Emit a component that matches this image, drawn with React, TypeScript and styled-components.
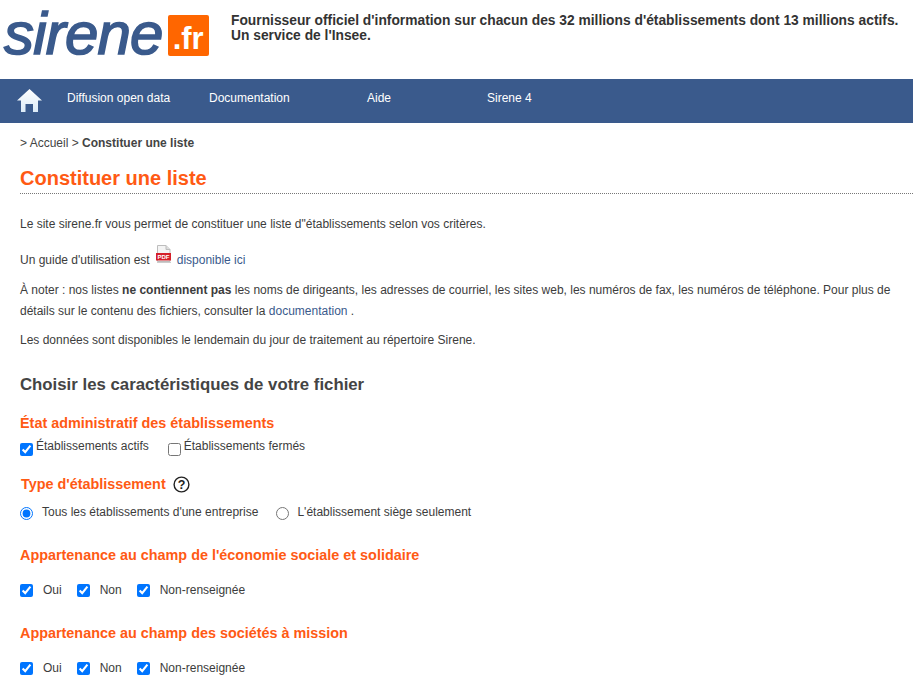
import React from "react";
import styled, { createGlobalStyle } from "styled-components";

const Global = createGlobalStyle`
  html, body { margin: 0; padding: 0; background: #fff; overflow: hidden; }
  body { font-family: "Liberation Sans", Arial, sans-serif; font-size: 12px; color: #333; }
`;
const Page = styled.div`width: 913px; height: 686px; overflow: hidden;`;
const Header = styled.header`display: flex; height: 79px; align-items: flex-start;`;
const Logo = styled.div`display: flex; align-items: flex-start; width: 231px; height: 79px; padding: 0 0 0 4px; box-sizing: border-box;`;
const LogoWord = styled.span`
  font: italic 400 60px/1 "Liberation Sans", sans-serif; color: #3a5a8c; letter-spacing: -0.8px;
  margin-top: 4px; -webkit-text-stroke: 1.6px #3a5a8c;
`;
const LogoBox = styled.span`
  width: 41px; height: 41px; margin: 15px 0 0 5px; background: #ff6600; border-radius: 2px; color: #fff;
  font: 700 31px/47px "Liberation Sans", sans-serif; text-align: center; flex: none;
`;
const Tagline = styled.p`margin: 13px 0 0; font-size: 13.8px; line-height: 15px; font-weight: 700; color: #333; white-space: nowrap;`;
const Nav = styled.nav`display: flex; height: 44px; background: #3a5a8c; align-items: center;`;
const HomeLink = styled.a`display: flex; width: 67px; padding-left: 17px; box-sizing: border-box;`;
const NavItem = styled.a<{ $w: number }>`
  display: block; width: ${(p) => p.$w}px; color: #fff; font-size: 12px; margin-top: -7px; white-space: nowrap;
`;
const Content = styled.main`padding: 0 0 0 20px;`;
const Crumbs = styled.div`margin-top: 13px; line-height: 14px; color: #444;`;
const Title = styled.h1`
  margin: 15px 0 0 0; padding-bottom: 1px; font-size: 20px; line-height: 27px; color: #ff5a14; font-weight: 700;
  border-bottom: 1px dotted #777;
`;
const Para = styled.p`margin: 0; line-height: 21px; color: #3c3c3c; padding-right: 20px;`;
const Intro = styled(Para)`margin-top: 20px;`;
const Guide = styled(Para)`margin-top: 10px; display: flex; align-items: flex-end; height: 25px; line-height: 19px;`;
const Note = styled(Para)`margin-top: 10px;`;
const Avail = styled(Para)`margin-top: 8px;`;
const Link = styled.a`color: #3a5a8c;`;
const PdfWrap = styled.span`display: inline-flex; margin: 0 5px 0 5px; align-self: flex-start;`;
const Section = styled.h2`margin: 24px 0 0; font-size: 16.8px; line-height: 20px; color: #444; font-weight: 700;`;
const SubTitle = styled.h3<{ $mt: number; $ml?: number }>`
  margin: ${(p) => p.$mt}px 0 0 ${(p) => p.$ml || 0}px; font-size: 14.4px; line-height: 18px; color: #ff5a14; font-weight: 700;
  display: flex; align-items: center; gap: 7px;
`;
const Row = styled.div<{ $mt: number; $gap: number }>`display: flex; margin-top: ${(p) => p.$mt}px; gap: ${(p) => p.$gap}px; height: 20px;`;
const Option = styled.label<{ $gap: number; $up?: number }>`
  display: flex; align-items: center; gap: ${(p) => p.$gap}px; line-height: 14px; color: #3c3c3c;
  span { position: relative; top: ${(p) => -(p.$up || 0)}px; }
`;
const Check = styled.input.attrs({ type: "checkbox" })`width: 13px; height: 13px; margin: 0; flex: none;`;
const Radio = styled.input.attrs({ type: "radio" })`width: 13px; height: 13px; margin: 0; flex: none;`;

const HomeIcon = () => (
  <svg width="26" height="24" viewBox="0 0 26 24">
    <defs>
      <linearGradient id="hg" x1="0" y1="0" x2="0" y2="1">
        <stop offset="0" stopColor="#ffffff" />
        <stop offset="1" stopColor="#dcebf7" />
      </linearGradient>
    </defs>
    <path fill="url(#hg)" d="M12.5 0 L25 11.5 L21 11.5 L21 23 L16 23 L16 15 L8.5 15 L8.5 23 L4 23 L4 11.5 L0 11.5 Z" />
  </svg>
);
const PdfIcon = () => (
  <svg width="17" height="18" viewBox="0 0 17 18">
    <path d="M2.5 0.5 H11 L15 4.5 V16.5 H2.5 Z" fill="#f4f4f4" stroke="#bdbdbd" />
    <path d="M11 0.5 V4.5 H15" fill="#ddd" stroke="#bdbdbd" />
    <rect x="1" y="8" width="15" height="7.5" fill="#d5202a" />
    <text x="8.5" y="14" textAnchor="middle" fontSize="6" fontWeight="700" fontFamily="Liberation Sans" fill="#fff">PDF</text>
    <rect x="2" y="17" width="14" height="1" fill="#ccc" />
  </svg>
);
const HelpIcon = () => (
  <svg width="17" height="17" viewBox="0 0 17 17">
    <circle cx="8.5" cy="8.5" r="7.4" fill="#fff" stroke="#222" strokeWidth="1.4" />
    <text x="8.5" y="13" textAnchor="middle" fontSize="12.5" fontWeight="700" fontFamily="Liberation Sans" fill="#222">?</text>
  </svg>
);

const Triple = ({ mt }: { mt: number }) => (
  <Row $mt={mt} $gap={15}>
    <Option $gap={10}><Check defaultChecked /><span>Oui</span></Option>
    <Option $gap={10}><Check defaultChecked /><span>Non</span></Option>
    <Option $gap={10}><Check defaultChecked /><span>Non-renseignée</span></Option>
  </Row>
);

export default function App() {
  return (
    <Page>
      <Global />
      <Header>
        <Logo>
          <LogoWord>sirene</LogoWord>
          <LogoBox>.fr</LogoBox>
        </Logo>
        <Tagline>
          Fournisseur officiel d'information sur chacun des 32 millions d'établissements dont 13 millions actifs.
          <br />
          Un service de l'Insee.
        </Tagline>
      </Header>
      <Nav>
        <HomeLink><HomeIcon /></HomeLink>
        <NavItem $w={142}>Diffusion open data</NavItem>
        <NavItem $w={158}>Documentation</NavItem>
        <NavItem $w={120}>Aide</NavItem>
        <NavItem $w={100}>Sirene 4</NavItem>
      </Nav>
      <Content>
        <Crumbs>&gt; Accueil &gt; <b>Constituer une liste</b></Crumbs>
        <Title>Constituer une liste</Title>
        <Intro>Le site sirene.fr vous permet de constituer une liste d"établissements selon vos critères.</Intro>
        <Guide>
          Un guide d'utilisation est <PdfWrap><PdfIcon /></PdfWrap><Link>disponible ici</Link>
        </Guide>
        <Note>
          À noter : nos listes <b>ne contiennent pas</b> les noms de dirigeants, les adresses de courriel, les sites web, les numéros de fax, les numéros de téléphone. Pour plus de détails sur le contenu des fichiers, consulter la <Link>documentation</Link> .
        </Note>
        <Avail>Les données sont disponibles le lendemain du jour de traitement au répertoire Sirene.</Avail>
        <Section>Choisir les caractéristiques de votre fichier</Section>
        <SubTitle $mt={19}>État administratif des établissements</SubTitle>
        <Row $mt={7} $gap={19}>
          <Option $gap={3} $up={3}><Check defaultChecked /><span>Établissements actifs</span></Option>
          <Option $gap={3} $up={3}><Check /><span>Établissements fermés</span></Option>
        </Row>
        <SubTitle $mt={16} $ml={1}>Type d'établissement <HelpIcon /></SubTitle>
        <Row $mt={10} $gap={18}>
          <Option $gap={9} $up={1}><Radio name="t" defaultChecked /><span>Tous les établissements d'une entreprise</span></Option>
          <Option $gap={8} $up={1}><Radio name="t" /><span>L'établissement siège seulement</span></Option>
        </Row>
        <SubTitle $mt={23}>Appartenance au champ de l'économie sociale et solidaire</SubTitle>
        <Triple mt={16} />
        <SubTitle $mt={24}>Appartenance au champ des sociétés à mission</SubTitle>
        <Triple mt={16} />
      </Content>
    </Page>
  );
}
